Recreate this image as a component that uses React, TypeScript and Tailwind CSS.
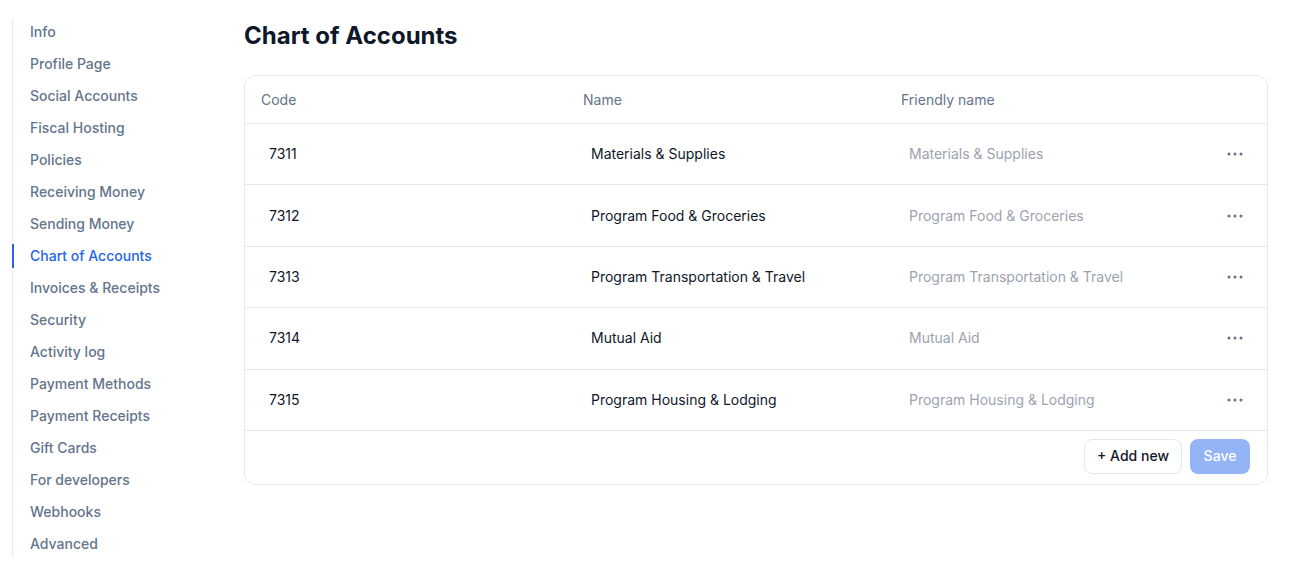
import React from "react";

const items = [
  "Info",
  "Profile Page",
  "Social Accounts",
  "Fiscal Hosting",
  "Policies",
  "Receiving Money",
  "Sending Money",
  "Chart of Accounts",
  "Invoices & Receipts",
  "Security",
  "Activity log",
  "Payment Methods",
  "Payment Receipts",
  "Gift Cards",
  "For developers",
  "Webhooks",
  "Advanced",
];

const rows = [
  ["7311", "Materials & Supplies"],
  ["7312", "Program Food & Groceries"],
  ["7313", "Program Transportation & Travel"],
  ["7314", "Mutual Aid"],
  ["7315", "Program Housing & Lodging"],
];

function Dots() {
  return (
    <svg width="16" height="16" viewBox="0 0 16 16" fill="#64748b">
      <circle cx="2" cy="8" r="1.5" />
      <circle cx="8" cy="8" r="1.5" />
      <circle cx="14" cy="8" r="1.5" />
    </svg>
  );
}

export default function App() {
  return (
    <div
      className="flex min-h-[587px] w-[1300px] bg-white antialiased"
      style={{ fontFamily: "Inter, 'Noto Sans', sans-serif" }}
    >
      <div className="w-[244px] shrink-0 pl-3 pt-5">
        <div className="flex flex-col gap-2 border-l border-[#e2e8f0]">
          {items.map((it) => {
            const active = it === "Chart of Accounts";
            return (
              <div
                key={it}
                className={
                  "relative h-6 pl-[17px] text-sm font-medium leading-6 " +
                  (active ? "text-[#2563eb]" : "text-[#64748b]")
                }
              >
                {active && (
                  <span className="absolute left-[-1px] top-0 h-6 w-[2px] bg-[#2563eb]" />
                )}
                {it}
              </div>
            );
          })}
        </div>
      </div>
      <div className="w-[1024px] pt-5">
        <h1 className="mb-[23px] text-2xl font-bold leading-8 text-[#0f172a]">
          Chart of Accounts
        </h1>
        <div className="rounded-xl border border-[#e2e8f0]">
          <div className="grid h-12 grid-cols-[322px_318px_1fr] items-center border-b border-[#e2e8f0] text-sm text-[#64748b]">
            <div className="px-4">Code</div>
            <div className="px-4">Name</div>
            <div className="px-4">Friendly name</div>
          </div>
          {rows.map(([code, name]) => (
            <div
              key={code}
              className="grid h-[61.4px] grid-cols-[322px_318px_1fr_56px] items-center border-b border-[#e2e8f0] text-sm"
            >
              <div className="px-6 text-[#0f172a]">{code}</div>
              <div className="px-6 text-[#0f172a]">{name}</div>
              <div className="px-6 text-[#9ca3af]">{name}</div>
              <div className="flex justify-start pl-[16px]">
                <Dots />
              </div>
            </div>
          ))}
          <div className="flex justify-end gap-2 pb-[10px] pl-4 pr-[17px] pt-2">
            <button className="h-[35px] rounded-lg border border-[#e2e8f0] px-3 text-sm font-medium text-[#0f172a]">
              + Add new
            </button>
            <button className="h-[35px] w-[60px] rounded-lg bg-[#93b4f5] text-sm font-medium text-white">
              Save
            </button>
          </div>
        </div>
      </div>
    </div>
  );
}
